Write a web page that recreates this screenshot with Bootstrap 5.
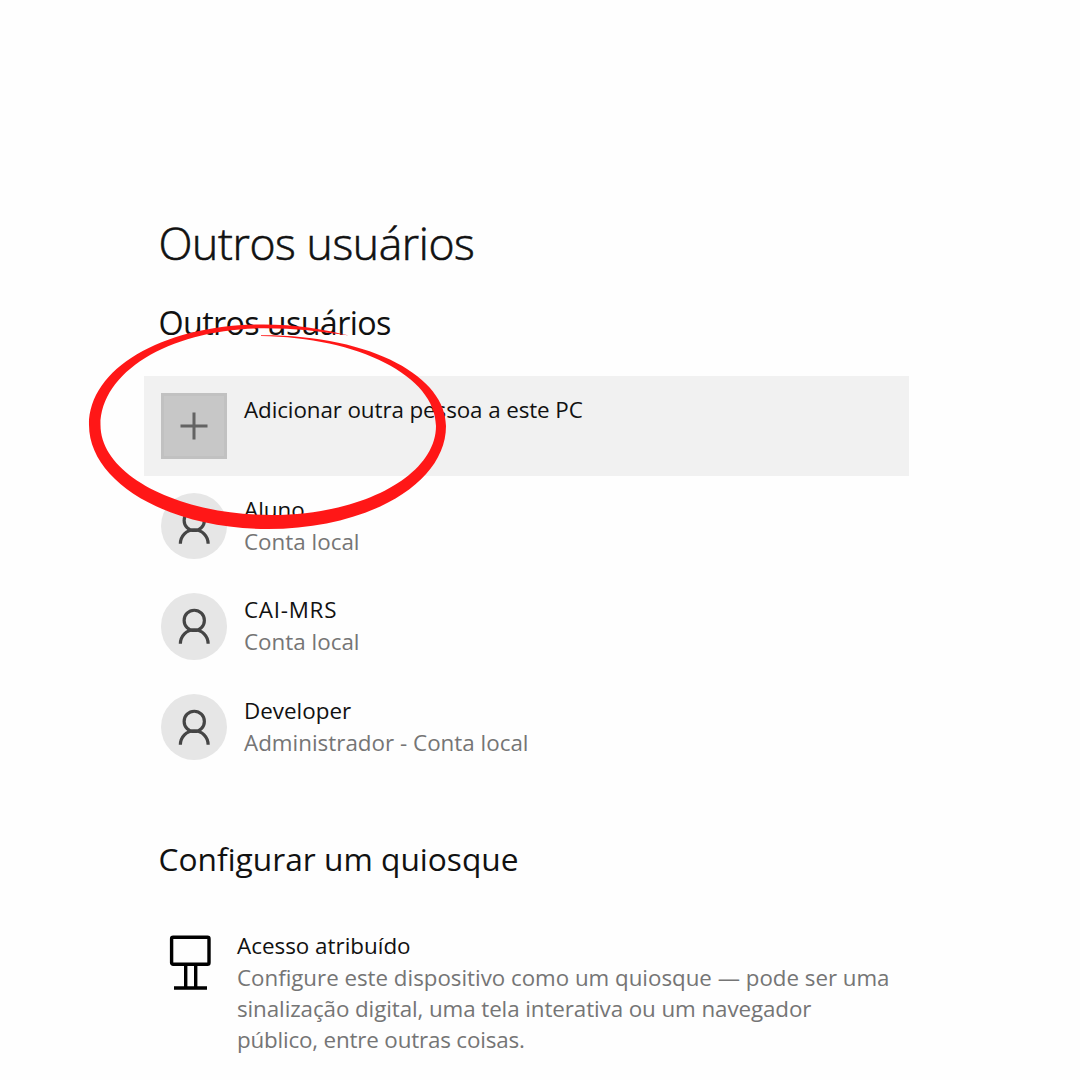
<!DOCTYPE html>
<html lang="pt-BR">
<head>
<meta charset="utf-8">
<meta name="viewport" content="width=device-width, initial-scale=1">
<title>Outros usuários</title>
<link rel="stylesheet" href="https://cdn.jsdelivr.net/npm/bootstrap@5.3.0/dist/css/bootstrap.min.css">
<style>
body{font-family:"Open Sans","Noto Sans",sans-serif;font-size:22.4px;line-height:32px;font-weight:400;color:#111;background:#fefefe;width:1080px;height:1080px;overflow:hidden}
.settings{width:765px;margin-left:144px;padding-top:213px}
.page-title{font-size:44.5px;line-height:60px;font-weight:300;-webkit-text-stroke:.6px #111;letter-spacing:-.4px;padding-left:14.5px;margin:0 0 27px}
.section-title{font-size:32.3px;line-height:44px;font-weight:400;letter-spacing:-.65px;padding-left:14.5px;margin:0}
.section-kiosk{font-size:31.7px;letter-spacing:0;margin-top:59.5px}
.users{margin-top:32px}
.user-row{height:100.4px;padding:16.5px 16.5px 0;gap:17px}
.user-row.active-row{background:#f1f1f1}
.tile{width:66.5px;height:66.5px;background:#c7c7c7;border:3px solid #c1c1c1}
.avatar{width:66.5px;height:66.5px;background:#e6e6e6}
.label-col{padding-top:1px}
.sub{color:#757575}
.kiosk{margin-top:48px;padding-left:25px}
.kiosk-icon{margin:6px 25px 0 0}
.kiosk .sub{line-height:31px}
.first-line{font-size:22.3px}
.tight{letter-spacing:-.1px}.tighter{letter-spacing:-.18px}.wide{letter-spacing:.75px}
.ring{left:80px;top:310px;pointer-events:none}
</style>
<script src="https://cdn.jsdelivr.net/npm/bootstrap@5.3.0/dist/js/bootstrap.bundle.min.js"></script>
</head>
<body class="position-relative">
<svg width="0" height="0" class="position-absolute">
  <symbol id="person" viewBox="0 0 67 67"><g fill="none" stroke="#454545" stroke-width="3.2"><circle cx="33.5" cy="27.6" r="10.2"/><path d="M19.500 51.200a14 14.200 0 0 1 28 0"/></g></symbol>
</svg>
<main class="settings">
  <h1 class="page-title">Outros usuários</h1>
  <h2 class="section-title">Outros usuários</h2>
  <div class="users">
    <div class="user-row active-row d-flex">
      <div class="tile d-flex align-items-center justify-content-center flex-shrink-0">
        <svg width="28" height="28" viewBox="0 0 28 28"><path d="M14 .5v27M.5 14h27" stroke="#333" stroke-opacity=".68" stroke-width="3" fill="none"/></svg>
      </div>
      <div class="label-col tight">Adicionar outra pessoa a este PC</div>
    </div>
    <div class="user-row d-flex">
      <div class="avatar rounded-circle flex-shrink-0"><svg class="d-block w-100 h-100"><use href="#person"/></svg></div>
      <div class="label-col"><div>Aluno</div><div class="sub">Conta local</div></div>
    </div>
    <div class="user-row d-flex">
      <div class="avatar rounded-circle flex-shrink-0"><svg class="d-block w-100 h-100"><use href="#person"/></svg></div>
      <div class="label-col"><div class="wide">CAI-MRS</div><div class="sub">Conta local</div></div>
    </div>
    <div class="user-row d-flex">
      <div class="avatar rounded-circle flex-shrink-0"><svg class="d-block w-100 h-100"><use href="#person"/></svg></div>
      <div class="label-col"><div>Developer</div><div class="sub">Administrador - Conta local</div></div>
    </div>
  </div>
  <h2 class="section-title section-kiosk">Configurar um quiosque</h2>
  <div class="kiosk d-flex">
    <svg class="kiosk-icon flex-shrink-0" width="43" height="56" viewBox="0 0 43 56"><g fill="none" stroke="#000" stroke-width="3.4"><rect x="2.6" y="2.3" width="37.4" height="27" rx="1.5"/><path d="M16.7 29v24M26.7 29v24M5 53h33"/></g></svg>
    <div class="label-col text-nowrap">
      <div>Acesso atribuído</div>
      <div class="sub"><span class="first-line">Configure este dispositivo como um quiosque — pode ser uma</span><br><span class="tight">sinalização digital, uma tela interativa ou um navegador</span><br><span class="tighter">público, entre outras coisas.</span></div>
    </div>
  </div>
</main>
<svg class="ring position-absolute" width="380" height="230" viewBox="80 310 380 230"><path fill="#ff1717" d="M349 335.5C322 329 296 324.500 263 324.500C165 324.500 89 367 89 425C89 482 168 529 268 529C367 529 446 484 446 426C446 378 374 335 261 335.300L261 335.900C358 337 436 376 436 426C436 475 363 515 272 515C178 515 100.500 475 100.500 425C100.500 371 172 328.300 264 328.300C296 328.300 320 331.500 349 335.500Z"/></svg>
</body>
</html>
